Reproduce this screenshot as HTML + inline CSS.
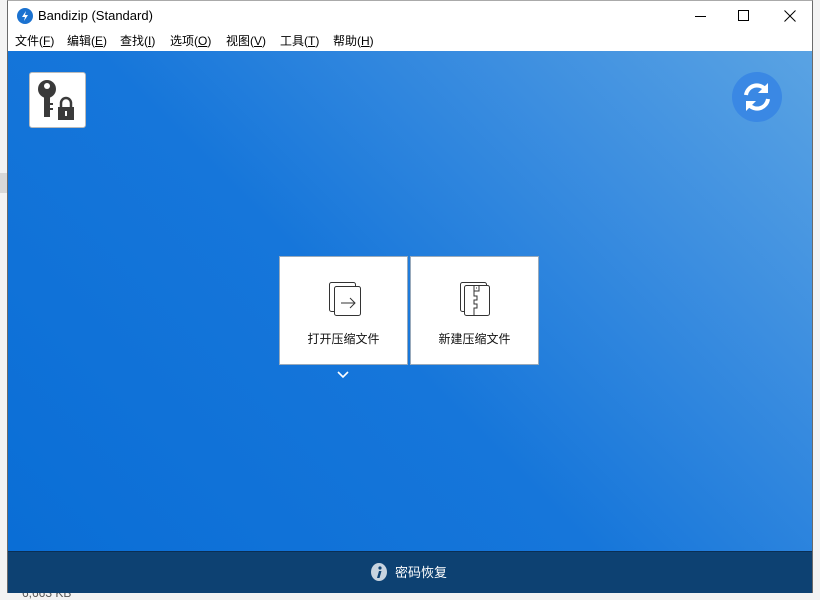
<!DOCTYPE html>
<html><head><meta charset="utf-8"><style>
*{margin:0;padding:0;box-sizing:border-box}
body{width:820px;height:600px;background:#f3f3f3;position:relative;overflow:hidden;font-family:"Liberation Sans","Noto Sans CJK SC",sans-serif}
.win{position:absolute;left:7px;top:0;width:806px;height:593px;background:#fff;border:1px solid #6a6a6a;border-top:1px solid #aaa}
.title{position:absolute;left:0;top:0;width:100%;height:30px;font-size:13px;color:#000}
.menu{position:absolute;left:0;top:30px;height:20px;width:100%;font-size:12px;color:#000}
.menu span{position:absolute;top:1px}
.main{position:absolute;left:0;top:50px;width:804px;height:501px;background:linear-gradient(225deg,#5aa3e3 0%,#3c8ee0 25%,#1676da 55%,#0a6ed6 100%)}
.bar{position:absolute;left:0;top:550px;width:804px;height:42px;background:#0d4172;border-top:1px solid #0a2f55;color:#fff;font-size:13px}
.card{position:absolute;top:255px;width:129px;height:109px;background:#fff;border:1px solid #9ab;font-size:12px;color:#111;text-align:center}
.card .t{position:absolute;top:73px;width:100%}
</style></head><body>
<div style="position:absolute;left:0;top:173px;width:7px;height:20px;background:#d8d8d8"></div>
<div style="position:absolute;left:22px;top:586px;font-size:12px;color:#555">6,663 KB</div>
<div class="win">
 <div class="title">
  <svg style="position:absolute;left:9px;top:7px" width="16" height="16"><circle cx="8" cy="8" r="8" fill="#1b72d0"/><path d="M9 3 L5 9 H8 L7 13 L11 7 H8 Z" fill="#fff"/></svg>
  <span style="position:absolute;left:30px;top:7px">Bandizip (Standard)</span>
  <div style="position:absolute;left:687px;top:15px;width:11px;height:1px;background:#000"></div>
  <div style="position:absolute;left:730px;top:9px;width:11px;height:11px;border:1px solid #000"></div>
  <svg style="position:absolute;left:776px;top:9px" width="12" height="12"><path d="M0.5 .5L11.5 11.5M11.5 .5L.5 11.5" stroke="#000"/></svg>
 </div>
 <div class="menu">
  <span style="left:7px">文件(<u>F</u>)</span><span style="left:59px">编辑(<u>E</u>)</span><span style="left:112px">查找(<u>I</u>)</span><span style="left:162px">选项(<u>O</u>)</span><span style="left:218px">视图(<u>V</u>)</span><span style="left:272px">工具(<u>T</u>)</span><span style="left:325px">帮助(<u>H</u>)</span>
 </div>
 <div class="main">
  <div style="position:absolute;left:21px;top:21px;width:57px;height:56px;background:#fff;border-radius:3px;border:1px solid #bbb">
   <svg width="57" height="56"><circle cx="17" cy="16" r="9" fill="#3a3a3a"/><circle cx="17" cy="13" r="3" fill="#fff"/><rect x="14" y="22" width="6" height="22" fill="#3a3a3a"/><rect x="20" y="30" width="3" height="2" fill="#3a3a3a"/><rect x="20" y="35" width="3" height="2" fill="#3a3a3a"/><path d="M31 34v-4a5 5 0 0 1 10 0v4" fill="none" stroke="#3a3a3a" stroke-width="2.5"/><rect x="28" y="34" width="16" height="13" fill="#3a3a3a"/><rect x="35" y="38" width="2" height="5" fill="#fff"/></svg>
  </div>
  <svg style="position:absolute;left:724px;top:21px" width="50" height="50"><circle cx="25" cy="25" r="25" fill="#3a88e4"/><path d="M14 23a11 11 0 0 1 19-6" fill="none" stroke="#fff" stroke-width="4"/><path d="M36 11v10h-10z" fill="#fff"/><path d="M36 27a11 11 0 0 1-19 6" fill="none" stroke="#fff" stroke-width="4"/><path d="M14 39v-10h10z" fill="#fff"/></svg>
 </div>
 <div class="card" style="left:271px">
  <svg style="position:absolute;left:48px;top:24px" width="34" height="36"><rect x="1.5" y="1.5" width="26" height="29" rx="2" fill="#fff" stroke="#333"/><rect x="6.5" y="5.5" width="26" height="29" rx="2" fill="#fff" stroke="#333"/><path d="M13 22h14M22 17l5 5-5 5" fill="none" stroke="#333"/></svg>
  <div class="t">打开压缩文件</div>
 </div>
 <div class="card" style="left:402px">
  <svg style="position:absolute;left:48px;top:24px" width="34" height="36"><rect x="1.5" y="1.5" width="26" height="29" rx="2" fill="#fff" stroke="#333"/><rect x="5.5" y="4.5" width="25" height="30" rx="2" fill="#fff" stroke="#333"/><path d="M15 5v5h5v-5M17 7h1M15 10v5h3v4h-3v4h3v4h-3v7" fill="none" stroke="#333"/></svg>
  <div class="t">新建压缩文件</div>
 </div>
 <svg style="position:absolute;left:329px;top:370px" width="12" height="8"><path d="M1 1l5 5 5-5" fill="none" stroke="#fff" stroke-width="1.6"/></svg>
 <div class="bar">
  <svg style="position:absolute;left:362px;top:11px" width="18" height="18"><ellipse cx="9" cy="9" rx="8" ry="9" fill="#c8d4e0"/><circle cx="10" cy="5" r="1.6" fill="#0d4172"/><path d="M9 8l-2 7h2.5l2-7z" fill="#0d4172"/></svg>
  <span style="position:absolute;left:387px;top:10px">密码恢复</span>
 </div>
</div>
</body></html>
